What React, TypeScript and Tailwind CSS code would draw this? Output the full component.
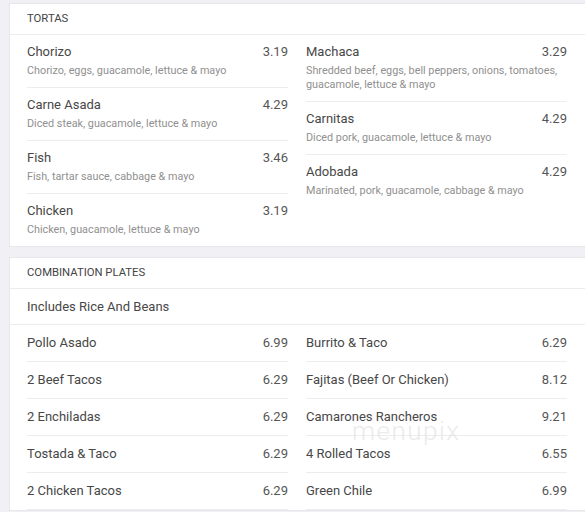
type Item = { name: string; price: string; desc?: string };

const tortasLeft: Item[] = [
  { name: "Chorizo", price: "3.19", desc: "Chorizo, eggs, guacamole, lettuce & mayo" },
  { name: "Carne Asada", price: "4.29", desc: "Diced steak, guacamole, lettuce & mayo" },
  { name: "Fish", price: "3.46", desc: "Fish, tartar sauce, cabbage & mayo" },
  { name: "Chicken", price: "3.19", desc: "Chicken, guacamole, lettuce & mayo" },
];

const tortasRight: Item[] = [
  {
    name: "Machaca",
    price: "3.29",
    desc: "Shredded beef, eggs, bell peppers, onions, tomatoes, guacamole, lettuce & mayo",
  },
  { name: "Carnitas", price: "4.29", desc: "Diced pork, guacamole, lettuce & mayo" },
  { name: "Adobada", price: "4.29", desc: "Marinated, pork, guacamole, cabbage & mayo" },
];

const comboLeft: Item[] = [
  { name: "Pollo Asado", price: "6.99" },
  { name: "2 Beef Tacos", price: "6.29" },
  { name: "2 Enchiladas", price: "6.29" },
  { name: "Tostada & Taco", price: "6.29" },
  { name: "2 Chicken Tacos", price: "6.29" },
];

const comboRight: Item[] = [
  { name: "Burrito & Taco", price: "6.29" },
  { name: "Fajitas (Beef Or Chicken)", price: "8.12" },
  { name: "Camarones Rancheros", price: "9.21" },
  { name: "4 Rolled Tacos", price: "6.55" },
  { name: "Green Chile", price: "6.99" },
];

function DescRow({ item, last }: { item: Item; last: boolean }) {
  return (
    <div className={last ? "pt-[7px] pb-[9px]" : "pt-[7px] pb-[9px] border-b border-[#ededf0]"}>
      <div className="flex justify-between text-[13px] leading-[20px] text-[#474747]">
        <span>{item.name}</span>
        <span className="text-[#555]">{item.price}</span>
      </div>
      <p className="mt-[2px] text-[10.8px] leading-[14px] text-[#909090]">{item.desc}</p>
    </div>
  );
}

function PlainRow({ item }: { item: Item }) {
  return (
    <div className="flex h-[37px] items-center justify-between border-b border-[#ededf0] pb-[1px] text-[13px] leading-[20px] text-[#474747]">
      <span>{item.name}</span>
      <span className="text-[#555]">{item.price}</span>
    </div>
  );
}

function Header({ title }: { title: string }) {
  return (
    <div className="flex h-[31px] items-center border-b border-[#ededf0] px-[17px] text-[11.3px] uppercase text-[#444]">
      {title}
    </div>
  );
}

export default function App() {
  return (
    <div className="min-h-screen w-[585px] overflow-hidden bg-[#f0f0f5] pt-[3px] font-['Roboto','Liberation_Sans',sans-serif]">
      <section className="ml-[9px] w-[580px] border border-[#e6e6eb] bg-white">
        <Header title="Tortas" />
        <div className="grid grid-cols-[261px_261px] gap-x-[18px] px-[17px]">
          <div>
            {tortasLeft.map((it, i) => (
              <DescRow key={it.name} item={it} last={i === tortasLeft.length - 1} />
            ))}
          </div>
          <div>
            {tortasRight.map((it, i) => (
              <DescRow key={it.name} item={it} last={i === tortasRight.length - 1} />
            ))}
          </div>
        </div>
      </section>

      <section className="relative mt-[10px] ml-[9px] w-[580px] border border-[#e6e6eb] bg-white">
        <Header title="Combination Plates" />
        <div className="flex h-[36px] items-center border-b border-[#ededf0] px-[17px] text-[13px] text-[#474747]">
          Includes Rice And Beans
        </div>
        <div className="grid grid-cols-[261px_261px] gap-x-[18px] px-[17px]">
          <div>
            {comboLeft.map((it) => (
              <PlainRow key={it.name} item={it} />
            ))}
          </div>
          <div>
            {comboRight.map((it) => (
              <PlainRow key={it.name} item={it} />
            ))}
          </div>
        </div>
        {/* watermark */}
        <span className="pointer-events-none absolute left-[342px] top-[160px] select-none text-[26px] font-light leading-none tracking-[1.5px] text-[#dcdcdc]/60">
          menupix
        </span>
      </section>
    </div>
  );
}
